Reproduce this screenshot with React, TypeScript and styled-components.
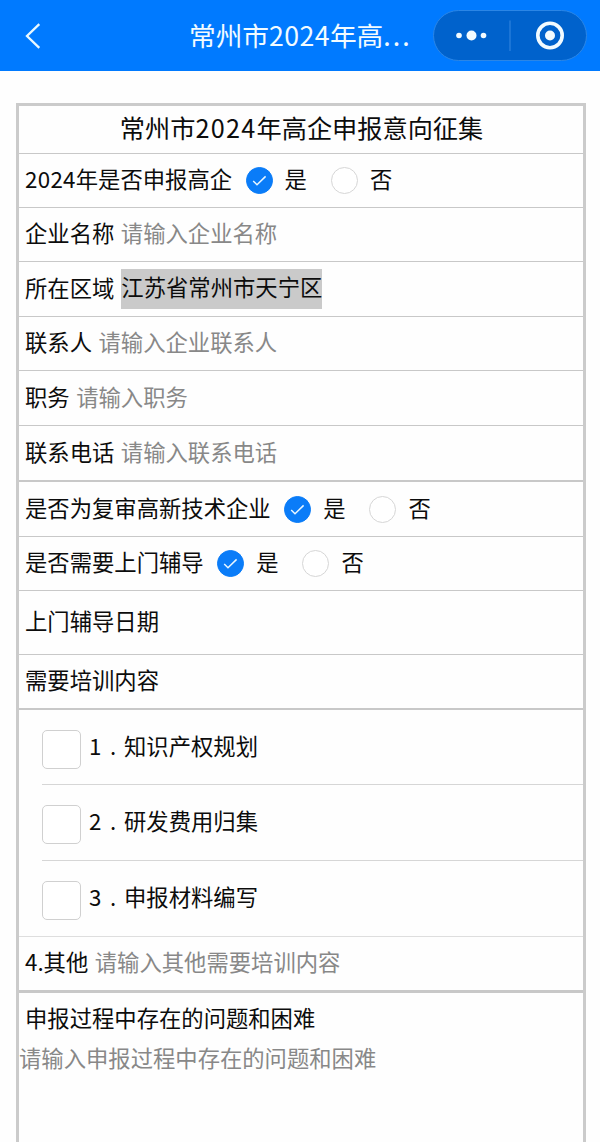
import React from "react";
import styled, { createGlobalStyle } from "styled-components";

const GlobalStyle = createGlobalStyle`
  * { box-sizing: border-box; }
  html, body { margin: 0; padding: 0; background: #fefefe; overflow: hidden; }
  body { font-family: "Noto Sans CJK SC", sans-serif; color: #0c0c0c; }
`;

const Screen = styled.div`
  width: 600px;
  height: 1142px;
  overflow: hidden;
  background: #fefefe;
`;

const NavBar = styled.header`
  display: flex;
  align-items: center;
  height: 71px;
  padding: 0 13px 0 24px;
  background: #007aff;
  color: #f2fbff;
`;

const BackIcon = styled.svg`
  display: block;
  width: 18px;
  height: 28px;
`;

const NavTitle = styled.h1`
  flex: 1;
  margin: 0 0 2px 147px;
  font-size: 26.7px;
  font-weight: 400;
  line-height: 40px;
  white-space: nowrap;
`;

const Capsule = styled.div`
  display: flex;
  align-items: center;
  width: 154px;
  height: 51px;
  border: 1px solid #2b86e6;
  border-radius: 26px;
  background: #0062cc;
`;

const CapsuleIcon = styled.svg`
  display: block;
  width: 152px;
  height: 49px;
`;

const Form = styled.main`
  display: flex;
  flex-direction: column;
  width: 570px;
  height: 1100px;
  margin: 32px 0 0 16px;
  border: 3px solid #cbcbcb;
`;

const Row = styled.div<{ $h: number; $line?: number }>`
  display: flex;
  flex: none;
  align-items: center;
  height: ${(p) => p.$h}px;
  padding: 0 0 5px 6px;
  border-bottom: ${(p) => p.$line ?? 1}px solid #c8c8c8;
  font-size: 22.33px;
  line-height: 34px;
  white-space: nowrap;
`;

const TitleRow = styled(Row)`
  justify-content: center;
  padding: 0 5px 6px 6px;
`;

const FormTitle = styled.h2`
  margin: 0;
  font-size: 25.2px;
  font-weight: 400;
  line-height: 36px;
`;

const Digits = styled.span<{ $gap: number }>`
  letter-spacing: ${(p) => p.$gap}px;
`;

const Placeholder = styled.span`
  margin-left: 6.5px;
  color: #888;
`;

const Region = styled.span`
  height: 40px;
  margin: 5px 0 0 7px;
  background: #cacaca;
  line-height: 35px;
`;

const Radio = styled.span<{ $on?: boolean }>`
  display: flex;
  align-items: center;
  justify-content: center;
  width: 27px;
  height: 27px;
  margin: 5px 12px 0 ${(p) => (p.$on ? 13.5 : 24)}px;
  border: 1px solid ${(p) => (p.$on ? "#0a7cf8" : "#d6d6d6")};
  border-radius: 50%;
  background: ${(p) => (p.$on ? "#0a7cf8" : "#fff")};
`;

const Options = styled.div`
  flex: none;
  border-bottom: 1px solid #dedede;
`;

const Option = styled.label`
  display: flex;
  align-items: center;
  height: 76px;
  margin-left: 23px;
  padding-bottom: 5px;
  border-bottom: 1px solid #d6d6d6;
  font-size: 22.33px;
  line-height: 34px;
  white-space: nowrap;
  &:first-child { height: 75px; }
  &:last-child { height: 75px; border-bottom: 0; }
`;

const Box = styled.span`
  width: 39px;
  height: 39px;
  margin: 9px 8px 0 0;
  border: 1.5px solid #d0d0d0;
  border-radius: 5px;
  background: #fff;
`;

const OptionNumber = styled.span`
  width: 35px;
  letter-spacing: 8.5px;
`;

const Problems = styled.section`
  padding-top: 7px;
  font-size: 22.33px;
  line-height: 34px;
`;

const ProblemsLabel = styled.div`
  padding-left: 6px;
`;

const ProblemsInput = styled.div`
  margin-top: 6px;
  color: #888;
`;

function YesNo() {
  return (
    <>
      <Radio $on>
        <svg width="15" height="13" viewBox="0 0 15 13" fill="none" stroke="#e8f6ff" strokeWidth="1.5">
          <path d="M1.2 7 5 10.8 13.6 2.4" />
        </svg>
      </Radio>
      是
      <Radio />
      否
    </>
  );
}

const options = ["知识产权规划", "研发费用归集", "申报材料编写"];

export default function App() {
  return (
    <Screen>
      <GlobalStyle />
      <NavBar>
        <BackIcon viewBox="0 0 18 28" fill="none" stroke="#e8f8ff" strokeWidth="2.3">
          <path d="M15.3 2.2 3 14 15.3 25.8" />
        </BackIcon>
        <NavTitle>
          常州市<Digits $gap={0.4}>2024</Digits>年高<Digits $gap={2}>...</Digits>
        </NavTitle>
        <Capsule>
          <CapsuleIcon viewBox="0 0 152 49" fill="#f2fbff">
            <circle cx="25" cy="24.5" r="2.8" />
            <circle cx="37.5" cy="24.5" r="5" />
            <circle cx="49.5" cy="24.5" r="2.8" />
            <path d="M76 9.5V40" stroke="#2b80dc" strokeWidth="1.3" />
            <circle cx="116" cy="24.5" r="12.2" fill="none" stroke="#f2fbff" strokeWidth="3.6" />
            <circle cx="116" cy="24.5" r="5" />
          </CapsuleIcon>
        </Capsule>
      </NavBar>
      <Form>
        <TitleRow $h={48}>
          <FormTitle>
            常州市<Digits $gap={1.3}>2024</Digits>年高企申报意向征集
          </FormTitle>
        </TitleRow>
        <Row $h={54}>
          <Digits $gap={0.3}>2024</Digits>年是否申报高企
          <YesNo />
        </Row>
        <Row $h={54}>企业名称<Placeholder>请输入企业名称</Placeholder></Row>
        <Row $h={55}>所在区域<Region>江苏省常州市天宁区</Region></Row>
        <Row $h={54}>联系人<Placeholder>请输入企业联系人</Placeholder></Row>
        <Row $h={55}>职务<Placeholder>请输入职务</Placeholder></Row>
        <Row $h={56} $line={2}>联系电话<Placeholder>请输入联系电话</Placeholder></Row>
        <Row $h={55}>是否为复审高新技术企业<YesNo /></Row>
        <Row $h={54}>是否需要上门辅导<YesNo /></Row>
        <Row $h={64}>上门辅导日期</Row>
        <Row $h={55} $line={2}>需要培训内容</Row>
        <Options>
          {options.map((name, i) => (
            <Option key={name}>
              <Box />
              <OptionNumber>{i + 1}.</OptionNumber>
              {name}
            </Option>
          ))}
        </Options>
        <Row $h={56} $line={3}>4.其他<Placeholder>请输入其他需要培训内容</Placeholder></Row>
        <Problems>
          <ProblemsLabel>申报过程中存在的问题和困难</ProblemsLabel>
          <ProblemsInput>请输入申报过程中存在的问题和困难</ProblemsInput>
        </Problems>
      </Form>
    </Screen>
  );
}
